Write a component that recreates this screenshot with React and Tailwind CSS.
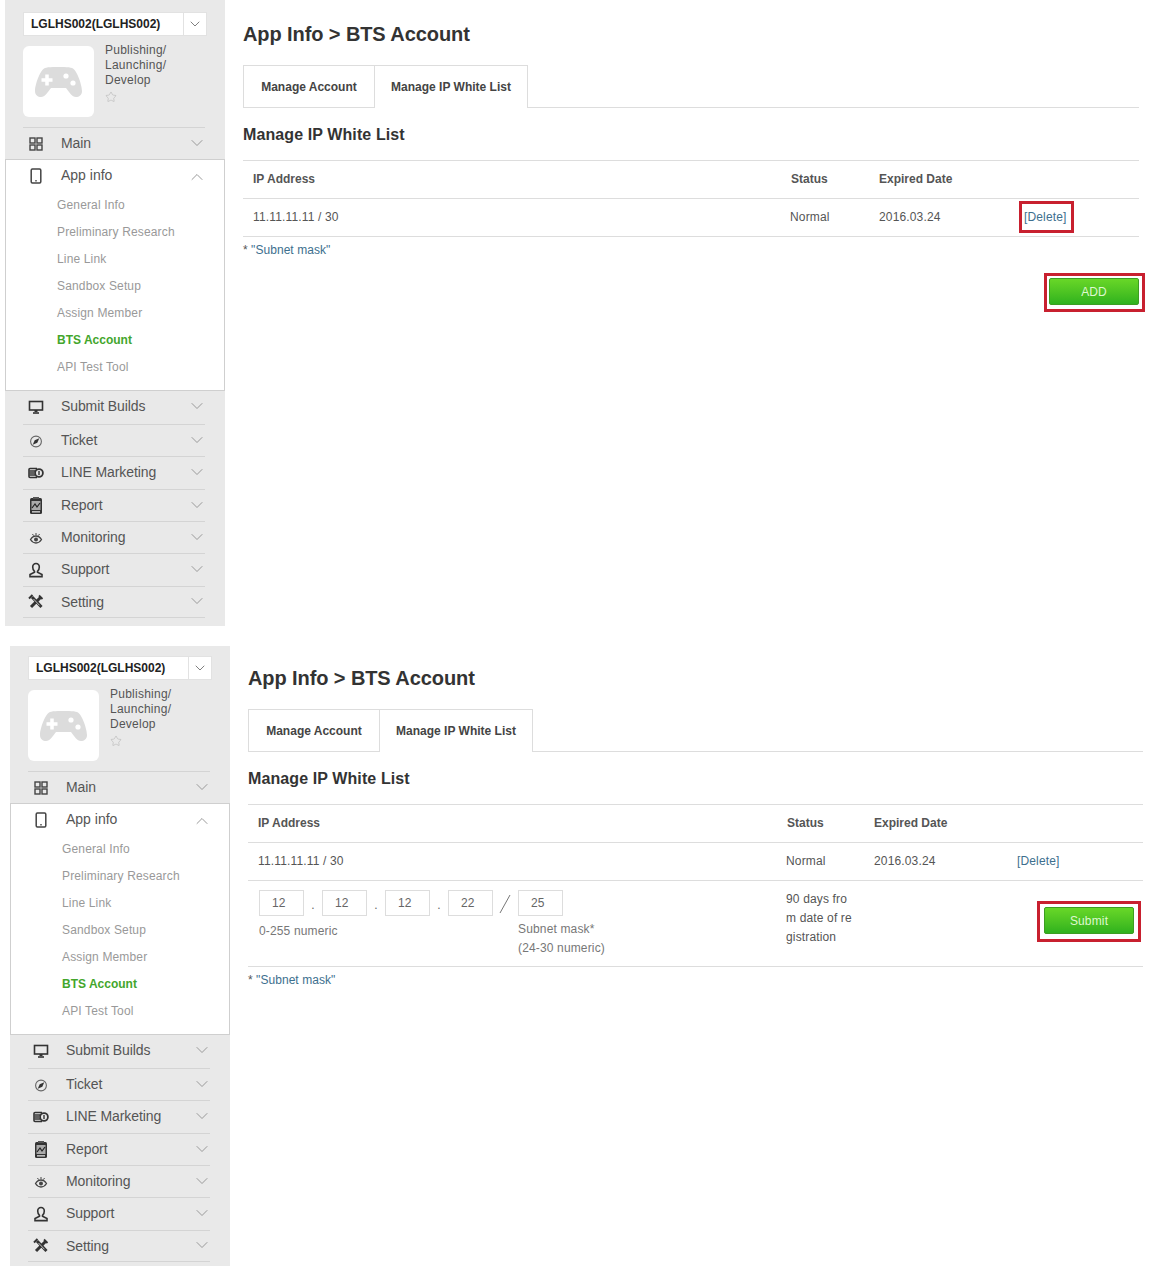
import { useState } from 'react'
import { ChevronDown, ChevronUp, Star } from 'lucide-react'

const GridIcon = () => (
  <svg width="16" height="16" viewBox="0 0 16 16" fill="none" stroke="#444" strokeWidth="1.4">
    <rect x="2" y="2" width="5" height="5" />
    <rect x="9" y="2" width="5" height="5" />
    <rect x="2" y="9" width="5" height="5" />
    <rect x="9" y="9" width="5" height="5" />
  </svg>
)

const PhoneIcon = () => (
  <svg width="16" height="16" viewBox="0 0 16 16" fill="none" stroke="#444" strokeWidth="1.5">
    <rect x="3.2" y="1" width="9.6" height="14" rx="1.2" />
    <path d="M7.3 12.8h1.4" />
  </svg>
)

const MonitorIcon = () => (
  <svg width="16" height="16" viewBox="0 0 16 16" fill="none" stroke="#333">
    <rect x="1.5" y="2.5" width="13" height="8.5" strokeWidth="1.6" />
    <path d="M5 14h6" strokeWidth="1.6" />
    <path d="M6.5 12h3" strokeWidth="2" />
  </svg>
)

const CompassIcon = () => (
  <svg width="16" height="16" viewBox="0 0 16 16" fill="none">
    <circle cx="8" cy="8.500" r="5.400" stroke="#666" strokeWidth="1.100" />
    <path d="M11.300 5.200 9.300 9.800 4.700 11.800 6.700 7.200z" fill="#333" />
  </svg>
)

const MarketingIcon = () => (
  <svg width="16" height="16" viewBox="0 0 16 16" fill="none" stroke="#333">
    <path d="M9 3.500H2a1 1 0 0 0-1 1v7a1 1 0 0 0 1 1h7" strokeWidth="1.600" />
    <path d="M1.500 6h5.500M1.500 8h5M1.500 10h5.500" strokeWidth="1.400" />
    <circle cx="11" cy="8" r="3.900" strokeWidth="1.800" />
    <path d="M11 6v4" strokeWidth="1.400" />
  </svg>
)

const ReportIcon = () => (
  <svg width="16" height="18" viewBox="0 0 16 18">
    <rect x="2" y="1" width="12" height="16" rx="1.500" fill="#333" />
    <rect x="5" y="0" width="6" height="2" fill="#555" />
    <rect x="3.500" y="4" width="9" height="9" fill="#aaa" />
    <path d="M4 11 7 7l2 3 3-4" stroke="#222" strokeWidth="1.200" fill="none" />
    <rect x="4" y="14.200" width="8" height="1.300" fill="#ddd" />
  </svg>
)

const EyeIcon = () => (
  <svg width="16" height="16" viewBox="0 0 16 16" fill="none" stroke="#444">
    <path d="M2.500 9.500C4 7 6 6 8 6s4 1 5.500 3.500C12 12 10 13 8 13s-4-1-5.500-3.500z" strokeWidth="1.300" />
    <circle cx="8" cy="9.500" r="2" fill="#444" stroke="none" />
    <path d="M8 3v2M4.500 4l1 1.600M11.500 4l-1 1.600" strokeWidth="1" />
  </svg>
)

const UserIcon = () => (
  <svg width="16" height="16" viewBox="0 0 16 16" fill="none" stroke="#333" strokeWidth="1.600">
    <path d="M8 1.500c-2 0-3.300 1.400-3.300 3.400S5.500 8.400 6.500 9.300v1L2 12.600v2h12v-2l-4.500-2.300v-1c1-.9 1.800-2.400 1.800-4.400S10 1.500 8 1.500z" />
  </svg>
)

const ToolsIcon = () => (
  <svg width="16" height="16" viewBox="0 0 16 16" fill="none">
    <path d="M4 3l9.500 10" stroke="#333" strokeWidth="3" />
    <path d="M13 3 3 13" stroke="#333" strokeWidth="3" />
    <path d="M1 4.500 4.500 1" stroke="#333" strokeWidth="2" />
    <path d="M11 1.500 14.500 5" stroke="#333" strokeWidth="1.800" />
    <path d="M5.500 5 11.500 11.300" stroke="#e9e9e9" strokeWidth="0.800" />
  </svg>
)

const GamepadIcon = () => (
  <svg width="47" height="30" viewBox="0 0 47 30">
    <path
      d="M10 1C14-.5 33-.5 37 1c5 2 10 17 10 23 0 4-3 6-6 6-4 0-7-5-10-9H16c-3 4-6 9-10 9-3 0-6-2-6-6C0 18 5 3 10 1z"
      fill="#dcdcdc"
    />
    <path d="M12 7.500v11M6.500 13h11" stroke="#fff" strokeWidth="3.500" />
    <circle cx="31" cy="9" r="2.600" fill="#fff" />
    <circle cx="38" cy="16" r="2.600" fill="#fff" />
  </svg>
)

const submenu = ['General Info', 'Preliminary Research', 'Line Link', 'Sandbox Setup', 'Assign Member', 'BTS Account', 'API Test Tool']

const lowerMenu = [
  { name: 'Submit Builds', icon: MonitorIcon, height: 'h-[34px] pb-[2px]' },
  { name: 'Ticket', icon: CompassIcon, height: 'h-[32px]' },
  { name: 'LINE Marketing', icon: MarketingIcon, height: 'h-[33px] pb-[1px]' },
  { name: 'Report', icon: ReportIcon, height: 'h-[32px]' },
  { name: 'Monitoring', icon: EyeIcon, height: 'h-[32px]' },
  { name: 'Support', icon: UserIcon, height: 'h-[33px] pb-[1px]' },
  { name: 'Setting', icon: ToolsIcon, height: 'h-[31px]' },
]

const MenuChevron = () => (
  <ChevronDown size={20} strokeWidth={1.1} className="-mr-[2px] -translate-y-[1px] text-[#909090]" />
)

const MenuRow = ({ name, icon: Icon, height }) => (
  <div className={`${height} mr-[20px] ml-[18px] flex items-center border-b border-[#d4d4d4] text-[14px] tracking-[-0.1px] text-[#555]`}>
    <span className="flex w-[38px] justify-start pl-[5px]">
      <Icon />
    </span>
    <span className="flex-1">{name}</span>
    <MenuChevron />
  </div>
)

const Sidebar = ({ className }) => (
  <aside className={`w-[220px] shrink-0 overflow-hidden bg-[#e9e9e9] ${className}`}>
    <div className="mx-[18px] flex h-[24px] w-[184px] items-center border border-[#e2e2e2] bg-white">
      <span className="flex-1 pl-[7px] text-[12px] font-bold text-[#222]">LGLHS002(LGLHS002)</span>
      <span className="flex h-full w-[23px] items-center justify-center border-l border-[#e2e2e2]">
        <ChevronDown size={16} strokeWidth={1.5} className="text-[#808080]" />
      </span>
    </div>
    <div className="mt-[10px] mr-[20px] ml-[18px] flex gap-[11px] border-b border-[#d4d4d4] pb-[10px]">
      <div className="flex h-[71px] w-[71px] items-center justify-center rounded-md bg-white">
        <GamepadIcon />
      </div>
      <div className="-mt-[3px] text-[12px] leading-[15px] tracking-[0.25px] text-[#555]">
        <div>Publishing/</div>
        <div>Launching/</div>
        <div>Develop</div>
        <Star size={12} strokeWidth={1} className="mt-[3px] text-[#aaa]" />
      </div>
    </div>
    <div className="mr-[20px] ml-[18px] flex h-[31px] items-center text-[14px] tracking-[-0.1px] text-[#555]">
      <span className="flex w-[38px] pl-[5px]">
        <GridIcon />
      </span>
      <span className="flex-1">Main</span>
      <MenuChevron />
    </div>
    <div className="border border-[#cfcfcf] bg-white pb-[10px]">
      <div className="mr-[19px] ml-[17px] flex h-[31px] items-center text-[14px] text-[#555]">
        <span className="flex w-[38px] pl-[5px]">
          <PhoneIcon />
        </span>
        <span className="flex-1">App info</span>
        <ChevronUp size={20} strokeWidth={1.1} className="-mr-[2px] translate-y-[1px] text-[#909090]" />
      </div>
      {submenu.map((item) => (
        <div
          key={item}
          className={`flex h-[27px] items-center pl-[51px] text-[12px] ${
            item === 'BTS Account' ? 'font-bold text-[#43a62c]' : 'tracking-[0.15px] text-[#999]'
          }`}
        >
          {item}
        </div>
      ))}
    </div>
    {lowerMenu.map((row) => (
      <MenuRow key={row.name} {...row} />
    ))}
  </aside>
)

const GreenButton = ({ label }) => (
  <button className="h-[27px] w-[90px] rounded-[2px] border border-[#3d9d22] bg-gradient-to-b from-[#68d728] to-[#2eb21e] text-[12px] text-[#dff8cf]">
    {label}
  </button>
)

const IpInput = ({ value }) => {
  const [text, setText] = useState(value)
  return (
    <input
      value={text}
      onChange={(e) => setText(e.target.value)}
      className="h-[26px] w-[45px] border border-[#ddd] pl-[12px] text-[12px] text-[#666] outline-none"
    />
  )
}

const Dot = () => <span className="w-[18px] pt-[6px] text-center text-[12px] text-[#666]">.</span>

const Main = ({ adding, className, widths, statusCell, deleteCell, addBox }) => (
  <main className={`ml-[18px] ${className}`}>
    <h1 className="text-[20px] leading-[24px] font-bold tracking-[-0.09px] text-[#333]">App Info &gt; BTS Account</h1>
    <div className="mt-[19px] flex h-[43px] border-b border-[#ddd] text-[12px] font-bold text-[#444]">
      <div className="flex h-[43px] w-[132px] items-center justify-center border border-[#ddd]">Manage Account</div>
      <div className="-ml-px flex h-[43px] w-[154px] items-center justify-center border border-b-0 border-[#ddd] bg-white">
        Manage IP White List
      </div>
    </div>
    <h2 className="mt-[17px] text-[16px] leading-[20px] font-bold tracking-[0.1px] text-[#333]">Manage IP White List</h2>
    <table className="mt-[15px] w-full table-fixed border-collapse border-t border-[#ddd] text-[12px] tracking-[0.15px] text-[#555]">
      <colgroup>
        {widths.map((w) => (
          <col key={w} className={w} />
        ))}
      </colgroup>
      <tbody>
        <tr className="h-[38px] border-b border-[#ddd] font-bold tracking-normal text-[#555]">
          <td className="pb-[2px] pl-[10px]">IP Address</td>
          <td className="pb-[2px] pl-[11px]">Status</td>
          <td className="pb-[2px] pl-[10px]">Expired Date</td>
          <td />
        </tr>
        <tr className="h-[38px] border-b border-[#ddd]">
          <td className="pb-[1px] pl-[10px]">11.11.11.11 / 30</td>
          <td className={`pb-[1px] ${statusCell}`}>Normal</td>
          <td className="pb-[1px] pl-[10px]">2016.03.24</td>
          <td className={`pb-[1px] ${deleteCell}`}>
            {adding ? (
              <a className="text-[#3d6f8e]">[Delete]</a>
            ) : (
              <a className="inline-block border-[3px] border-[#c8202f] py-[4px] pr-[4px] pl-[2px] text-[#3d6f8e]">[Delete]</a>
            )}
          </td>
        </tr>
        {adding && (
          <tr className="h-[86px] border-b border-[#ddd] align-top">
            <td className="pt-[9px] pl-[11px]">
              <div className="flex">
                <IpInput value="12" />
                <Dot />
                <IpInput value="12" />
                <Dot />
                <IpInput value="12" />
                <Dot />
                <IpInput value="22" />
                <svg width="25" height="26" viewBox="0 0 25 26" fill="none" stroke="#777">
                  <path d="M7 23 17 5" />
                </svg>
                <IpInput value="25" />
              </div>
              <div className="flex text-[#777]">
                <span className="mt-[6px] w-[259px] leading-[19px]">0-255 numeric</span>
                <span className="mt-[4px] leading-[19px]">
                  Subnet mask*
                  <br />
                  (24-30 numeric)
                </span>
              </div>
            </td>
            <td className="pt-[9px] pl-[10px] leading-[19px]">
              90 days fro
              <br />
              m date of re
              <br />
              gistration
            </td>
            <td colSpan={2} className="pt-[20px] pr-[2px] text-right">
              <span className="inline-flex border-[3px] border-[#c8202f] px-[4px] pt-[3px] pb-[5px]">
                <GreenButton label="Submit" />
              </span>
            </td>
          </tr>
        )}
      </tbody>
    </table>
    <p className="mt-[6px] text-[12px] leading-[14px] tracking-[0.05px] text-[#3d6f8e]">
      <span className="text-[#555]">* </span>"Subnet mask"
    </p>
    {!adding && (
      <div className={`flex justify-end ${addBox}`}>
        <span className="-mr-[6px] inline-flex border-[3px] border-[#c8202f] pt-[2px] pr-[3px] pb-[4px] pl-[2px]">
          <GreenButton label="ADD" />
        </span>
      </div>
    )}
  </main>
)

const App = () => (
  <div className="h-[1266px] w-[1153px] overflow-hidden bg-white font-['Liberation_Sans',Arial,sans-serif]">
    <div className="ml-[5px] flex">
      <Sidebar className="h-[626px] pt-[12px]" />
      <Main
        className="w-[896px] pt-[22px]"
        widths={['w-[537px]', 'w-[89px]', 'w-[144px]', 'w-[126px]']}
        statusCell="pl-[10px]"
        deleteCell="pl-[6px]"
        addBox="mt-[16px]"
      />
    </div>
    <div className="mt-[20px] ml-[10px] flex">
      <Sidebar className="h-[620px] pt-[10px]" />
      <Main
        adding
        className="w-[895px] pt-[20px]"
        widths={['w-[528px]', 'w-[88px]', 'w-[143px]', 'w-[136px]']}
        statusCell="pl-[10px]"
        deleteCell="pl-[10px]"
      />
    </div>
  </div>
)

export default App
